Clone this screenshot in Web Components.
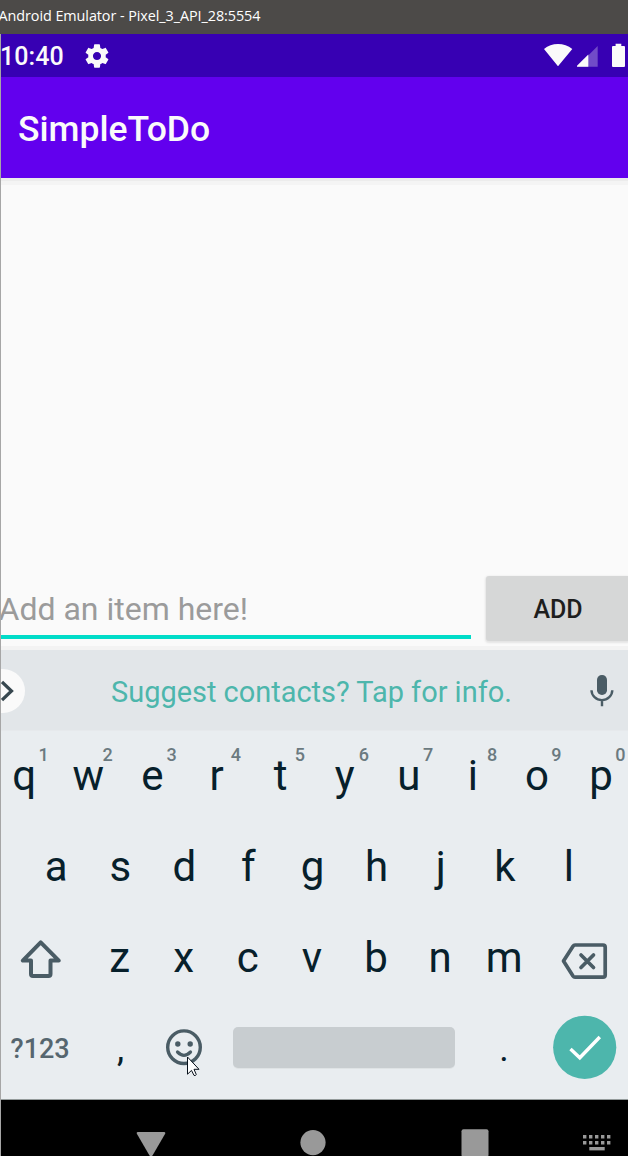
<!DOCTYPE html>
<html lang="en">
<head>
<meta charset="utf-8">
<title>SimpleToDo</title>
<style>
html, body { margin: 0; height: 100%; overflow: hidden; background: #000; }
body { font-family: Roboto, sans-serif; }
</style>
</head>
<body>
<emulator-window></emulator-window>
<script>
function define(name, html) {
  const t = document.createElement('template');
  t.innerHTML = html;
  customElements.define(name, class extends HTMLElement {
    constructor() {
      super();
      this.attachShadow({ mode: 'open' }).appendChild(t.content.cloneNode(true));
    }
  });
}

define('window-title', `
<style>
:host { display: block; height: 34px; background: #4c4a48; color: #fff; overflow: hidden;
  font: 14.4px/32px "Open Sans", sans-serif; letter-spacing: -0.07px; white-space: nowrap; }
span { margin-left: -1.5px; }
</style><span><slot></slot></span>`);

define('status-bar', `
<style>
:host { display: flex; height: 43px; background: #3700b3; align-items: center; color: #fafafa; overflow: hidden; }
.time { font-size: 25px; font-weight: 500; line-height: 43px; width: 82.5px; margin-left: -1px; padding-top: 2px; white-space: nowrap; letter-spacing: 0.1px; }
.gap { flex: 1; }
svg { display: block; flex: none; }
</style>
<span class="time"><slot></slot></span>
<svg width="28" height="28" viewBox="0 0 24 24" fill="#fafafa"><path d="M19.43 12.98c.04-.32.07-.64.07-.98s-.03-.66-.07-.98l2.11-1.65c.19-.15.24-.42.12-.64l-2-3.46c-.12-.22-.39-.3-.61-.22l-2.49 1c-.52-.4-1.08-.73-1.69-.98l-.38-2.65C14.46 2.18 14.25 2 14 2h-4c-.25 0-.46.18-.49.42l-.38 2.65c-.61.25-1.17.59-1.69.98l-2.49-1c-.23-.09-.49 0-.61.22l-2 3.46c-.13.22-.07.49.12.64l2.11 1.65c-.04.32-.07.65-.07.98s.03.66.07.98l-2.11 1.65c-.19.15-.24.42-.12.64l2 3.46c.12.22.39.3.61.22l2.49-1c.52.4 1.08.73 1.69.98l.38 2.65c.03.24.24.42.49.42h4c.25 0 .46-.18.49-.42l.38-2.65c.61-.25 1.17-.59 1.69-.98l2.49 1c.23.09.49 0 .61-.22l2-3.46c.12-.22.07-.49-.12-.64l-2.11-1.65zM12 15.5c-1.93 0-3.5-1.57-3.5-3.5s1.57-3.5 3.5-3.5 3.5 1.57 3.5 3.5-1.57 3.5-3.5 3.5z"/></svg>
<span class="gap"></span>
<svg width="84" height="43" viewBox="544 34 84 43" fill="#fafafa">
<path d="M544 49Q550 44 558 44Q566 44 572.3 49L558.6 65.6Q558 66.6 557.4 65.6Z"/>
<path d="M577 66.7L597.7 46V66.7Z" opacity=".3"/><path d="M577 66.7V65.7L588.3 54.5V66.7Z"/>
<path d="M613 46H615.6V43.7H621.3V46H624Q625 46 625 47V66Q625 67 624 67H613Q612 67 612 66V47Q612 46 613 46Z"/>
</svg>`);

define('app-bar', `
<style>
:host { display: flex; align-items: center; height: 101px; background: #6200ee; color: #fafafa;
  position: relative; z-index: 1; box-shadow: 0 3px 0 #ececec, 0 7px 0 #f4f4f4;
  font-size: 35.5px; font-weight: 500; line-height: 42px; }
span { margin-left: 17px; padding-top: 3px; }
</style><span><slot></slot></span>`);

define('todo-entry', `
<style>
:host { display: flex; height: 472px; box-sizing: border-box; background: #fafafa; align-items: flex-end; overflow: hidden; position: relative; }
.field { width: 470px; height: 72px; border-bottom: 4px solid #00dcc8; margin-bottom: 11px; box-sizing: border-box; flex: none; }
.field span { display: block; margin: 9px 0 0 -2.5px; font-size: 32px; line-height: 67px; color: #9b9b9b; white-space: nowrap; height: 59px; }
button { all: unset; box-sizing: border-box; width: 144px; height: 65px; flex: none; margin: 0 0 9px 15px; border-radius: 3px; background: #d6d7d7; color: #1e1e1e;
  font-size: 25px; font-weight: 500; line-height: 67px; text-align: center; box-shadow: 0 1px 2px 1px #e4e4e4; }
</style>
<div class="field"><span><slot></slot></span></div><button>ADD</button>`);

define('suggestion-strip', `
<style>
:host { display: flex; height: 81px; box-sizing: border-box; background: #e2e6e9; align-items: center; color: #4db6ac; position: relative;
  box-shadow: 0 -4px 0 #f3f3f3; border-bottom: 1px solid #e6e9ec; }
svg { display: block; flex: none; }
span { width: 400px; margin-left: 85px; font-size: 28.95px; line-height: 40px; white-space: nowrap; padding-top: 4px; flex: none; }
.mic { margin-left: 78px; }
</style>
<svg width="25" height="80" viewBox="1 650 25 80"><circle cx="3" cy="691" r="22" fill="#fafafa"/><path d="M2 682L11.5 691L2 700" fill="none" stroke="#37474f" stroke-width="3.2"/></svg>
<span><slot></slot></span>
<svg class="mic" width="26" height="80" viewBox="589 650 26 80"><rect x="597" y="675" width="10" height="20" rx="4.8" fill="#4a5c65"/><path d="M591.5 690.3a10.4 9.8 0 0 0 20.8 0M602 700V706.3" fill="none" stroke="#4a5c65" stroke-width="2.4"/></svg>`);

define('letter-key', `
<style>
:host { display: block; position: relative; width: 64.1px; flex: none; text-align: center; font-size: 42px; line-height: 89px; color: #07202b; }
::slotted([slot=hint]) { position: absolute; left: 41.3px; top: 13px; width: 20px; text-align: center; font-size: 18px; line-height: 21px; font-weight: 500; color: #6b7a80; }
</style><slot></slot><slot name="hint"></slot>`);

define('key-row', `
<style>:host { display: flex; height: 91px; } </style><slot></slot>`);

define('shift-key', `
<style>:host { display: block; width: 86.5px; flex: none; } svg { display: block; }</style>
<svg width="87" height="91" viewBox="1 913 87 91" fill="none" stroke="#4a5c65" stroke-width="4" stroke-linejoin="round"><path d="M40.7 942.3L22.8 960.6H31V974Q31 976 33 976H48.5Q50.5 976 50.5 974V960.6H58.8Z"/></svg>`);

define('delete-key', `
<style>:host { display: block; flex: none; margin-left: .5px; } svg { display: block; }</style>
<svg width="91" height="91" viewBox="537 913 91 91" fill="none" stroke="#4a5c65" stroke-width="3.7" stroke-linejoin="round"><path d="M575 945H603Q605.2 945 605.2 947.2V975Q605.2 977.2 603 977.2H575Q573.8 977.2 573 976L563.5 961L573 946.2Q573.8 945 575 945Z"/><path d="M581 955L593.5 967.5M593.5 955L581 967.5" stroke-linecap="round"/></svg>`);

define('action-row', `
<style>
:host { display: grid; grid-template-columns: 78px 83px 71px 222px 98px 75px; height: 91px; align-items: center; position: relative; }
svg { display: block; }
.sym { font-size: 27px; font-weight: 500; color: #56666f; text-align: center; line-height: 91px; letter-spacing: -0.1px; }
.p { font-size: 36px; line-height: 91px; color: #07202b; text-align: center; }
.space { height: 41px; border-radius: 5px; background: #c8cdd0; box-shadow: 0 1px 0 #dfe3e5; margin-top: -4px; }
</style>
<span class="sym">?123</span><span class="p">,</span>
<svg width="71" height="91" viewBox="162 1004 71 91"><circle cx="184" cy="1047.2" r="16.3" fill="none" stroke="#4a5c65" stroke-width="3.4"/><circle cx="177.8" cy="1044" r="2.7" fill="#4a5c65"/><circle cx="190.2" cy="1044" r="2.7" fill="#4a5c65"/><path d="M177.5 1052q6.5 6.5 13 0" fill="none" stroke="#4a5c65" stroke-width="3.2" stroke-linecap="round"/>
<path d="M187.5 1057V1074.2L191.5 1070.4L194 1075.4Q195.3 1076 196.3 1074.6L194 1069.3H199Z" fill="#fff" stroke="#07101a" stroke-width="1"/></svg>
<span class="space"></span><span class="p">.</span>
<svg width="75" height="91" viewBox="553 1004 75 91"><circle cx="584.7" cy="1047.3" r="31.6" fill="#4db6ac"/><path d="M570.5 1049L579.8 1057.8L599.8 1037" fill="none" stroke="#fff" stroke-width="3.4"/></svg>`);

define('soft-keyboard', `
<style>
:host { display: block; height: 368px; background: #e9edf0; overflow: hidden; }
.r1 { margin-left: -8.8px; } .r2 { margin-left: 23.1px; }
</style>
<key-row class="r1">${[...'qwertyuiop'].map((c, i) => `<letter-key>${c}<span slot="hint">${(i + 1) % 10}</span></letter-key>`).join('')}</key-row>
<key-row class="r2">${[...'asdfghjkl'].map(c => `<letter-key>${c}</letter-key>`).join('')}</key-row>
<key-row><shift-key></shift-key>${[...'zxcvbnm'].map(c => `<letter-key>${c}</letter-key>`).join('')}<delete-key></delete-key></key-row>
<action-row></action-row>`);

define('navigation-bar', `
<style>:host { display: block; height: 57px; box-sizing: border-box; border-top: 1px solid #949b9b; background: #000; } svg { display: block; }</style>
<svg width="627" height="56" viewBox="1 1100 627 56" fill="#999">
<path d="M138 1132H164Q166 1132 165 1134L152.8 1155Q151 1158 149.2 1155L137 1134Q136 1132 138 1132Z"/>
<circle cx="313" cy="1142.6" r="12.6"/><rect x="461.5" y="1129.3" width="27" height="27.5" rx="2"/>
<path d="M583 1136.7h29M583 1142.7h29" stroke="#999" stroke-width="3.4" stroke-dasharray="3.4 2.6"/><rect x="589.3" y="1147" width="15.4" height="3.4"/>
</svg>`);

define('emulator-window', `
<style>
:host { display: block; width: 628px; height: 1156px; overflow: hidden; }
.phone { border-left: 1px solid #a6a6a6; width: 627px; overflow: hidden; }
</style>
<window-title>Android Emulator - Pixel_3_API_28:5554</window-title>
<div class="phone">
<status-bar>10:40</status-bar>
<app-bar>SimpleToDo</app-bar>
<todo-entry>Add an item here!</todo-entry>
<suggestion-strip>Suggest contacts? Tap for info.</suggestion-strip>
<soft-keyboard></soft-keyboard>
<navigation-bar></navigation-bar>
</div>`);
</script>
</body>
</html>
